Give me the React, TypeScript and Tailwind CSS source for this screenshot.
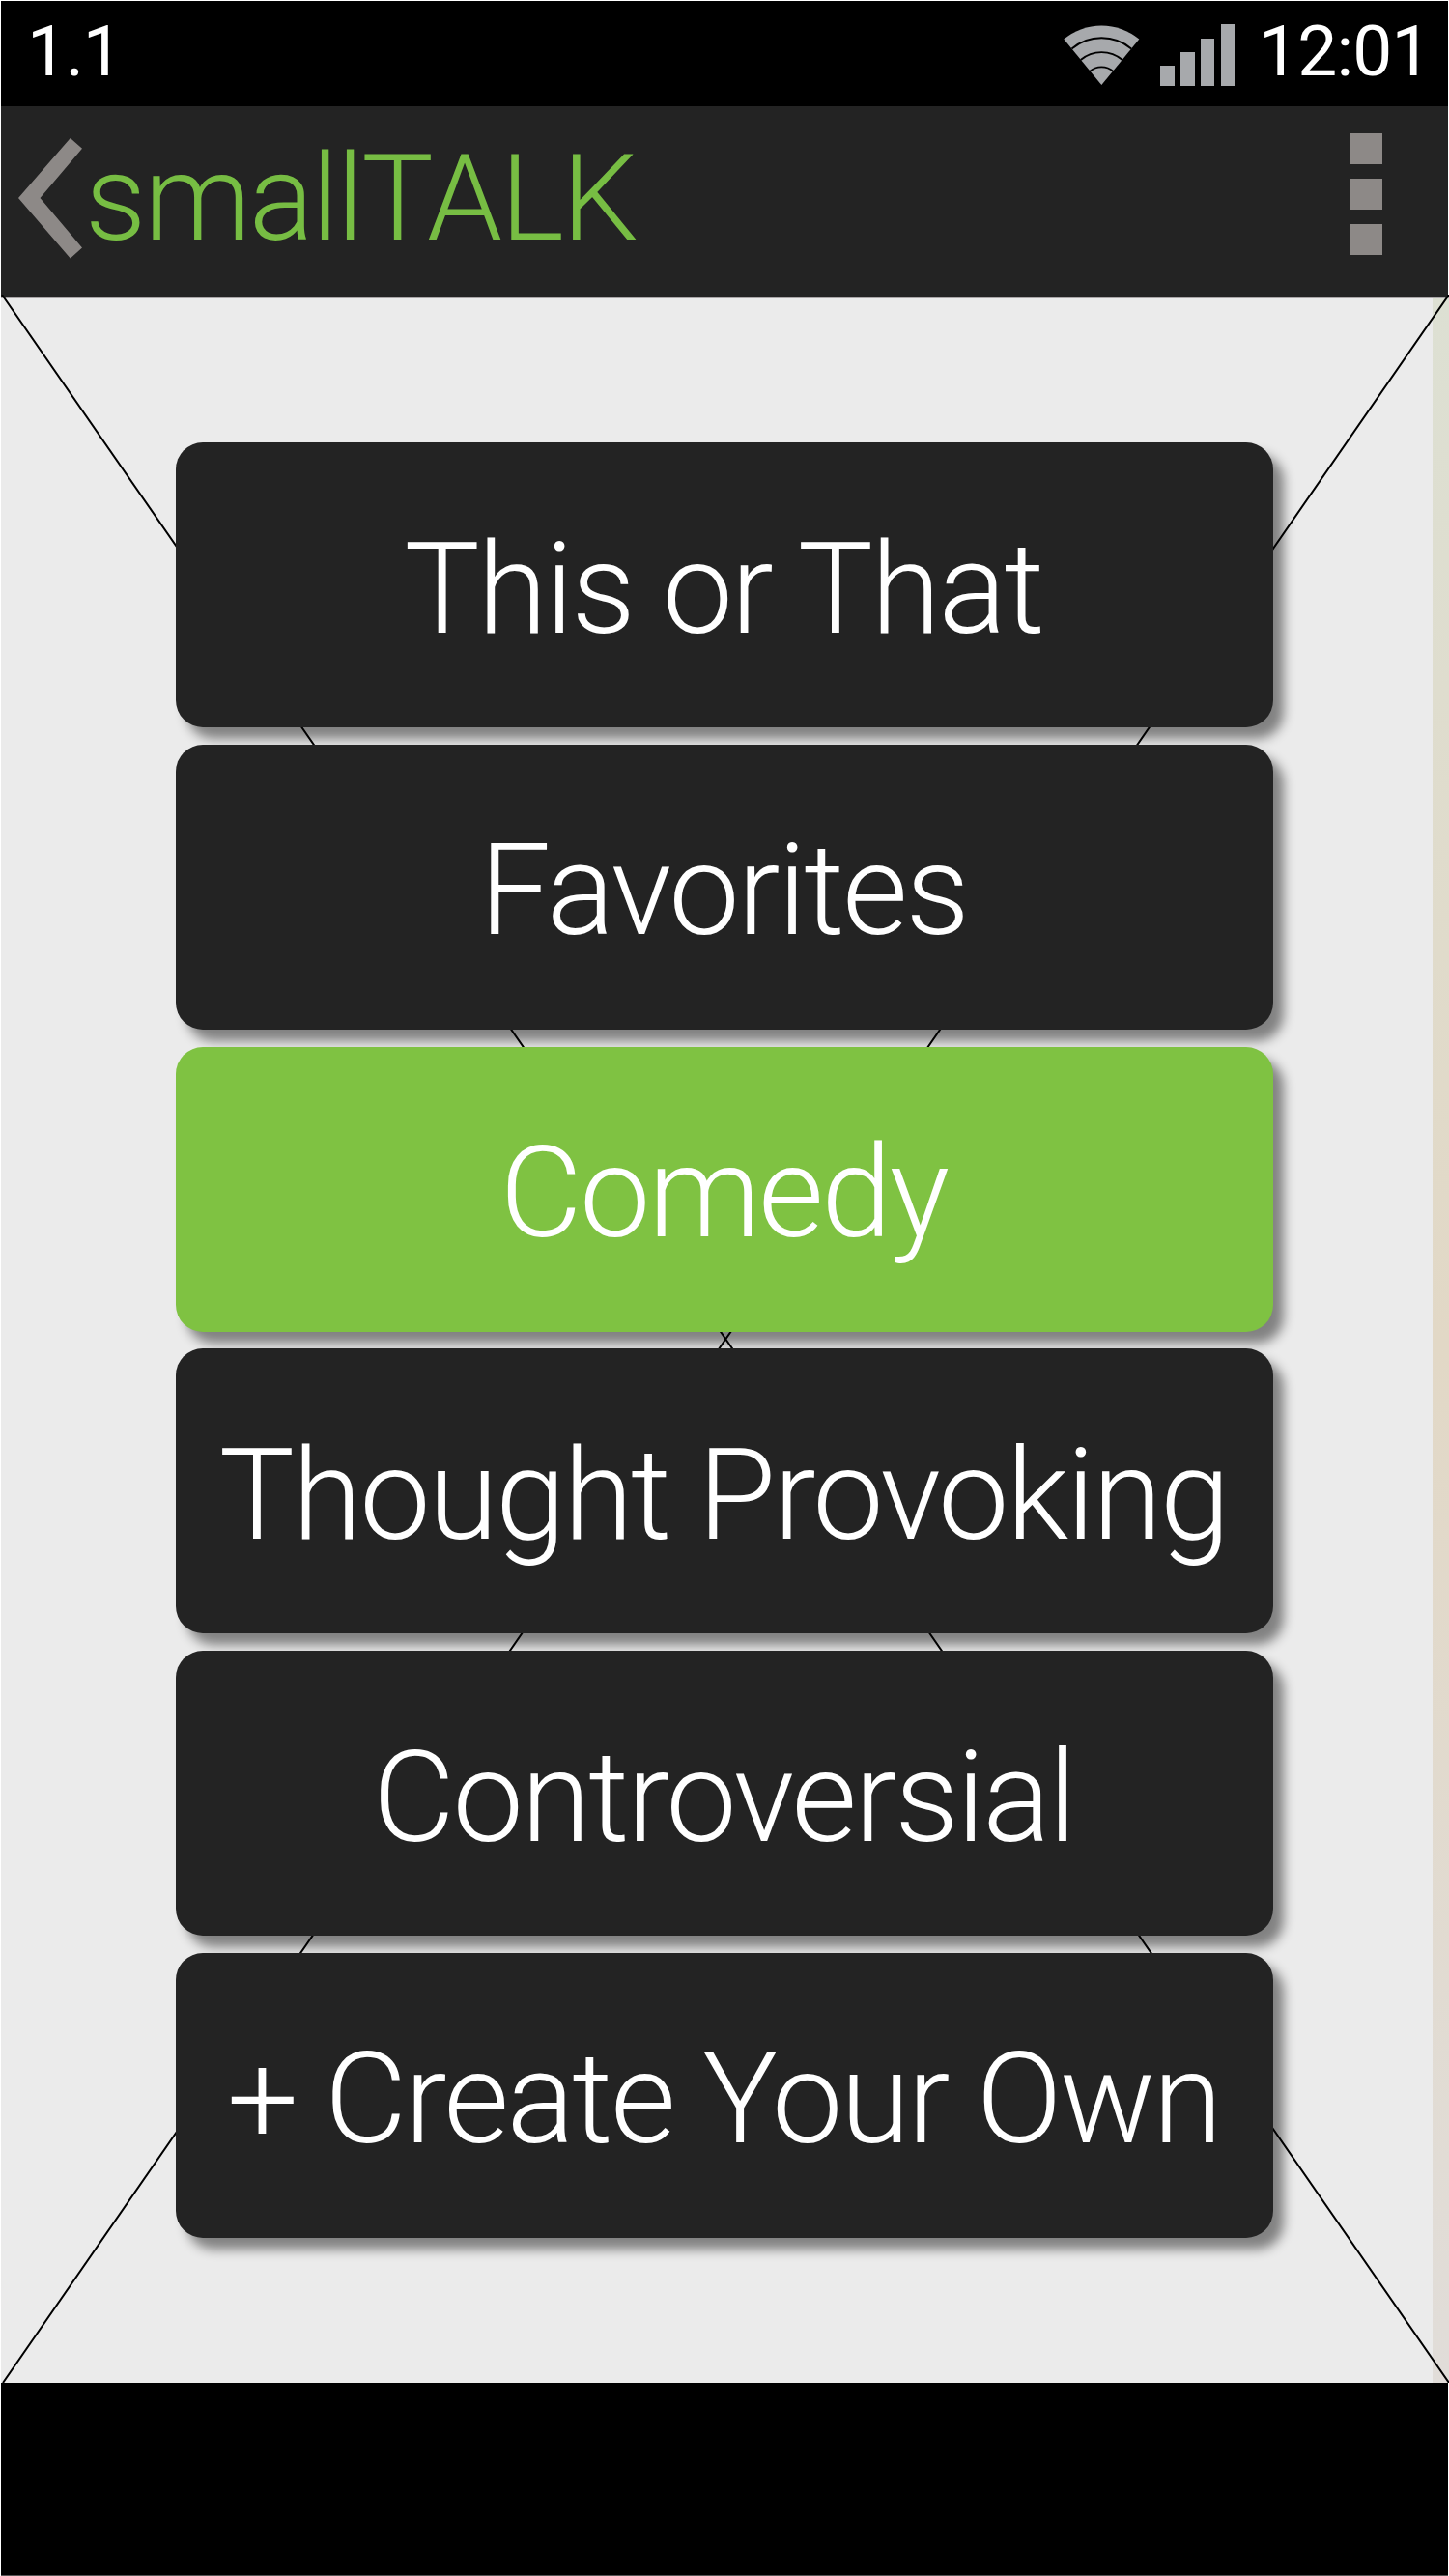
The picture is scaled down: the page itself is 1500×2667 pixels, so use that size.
const categories = [
  { label: "This or That", tracking: "tracking-[-2.2px]" },
  { label: "Favorites", tracking: "tracking-[-2.35px]" },
  { label: "Comedy", tracking: "tracking-[-2.4px]", active: true },
  { label: "Thought Provoking", tracking: "tracking-[-2.35px]" },
  { label: "Controversial", tracking: "tracking-[-2.4px]" },
  { label: "+ Create Your Own", tracking: "tracking-[-2.4px]" },
];

function WifiIcon() {
  return (
    <svg className="h-[64px] w-[80px]" viewBox="0 0 80 64">
      <path d="M40.3 63 L1.3 15.5 A61.5 61.5 0 0 1 79.3 15.5 Z" fill="#a7a9ac" />
      <g fill="none" stroke="#000" strokeWidth="1.9">
        <path d="M9.5 25.5 A48 48 0 0 1 71.1 25.5" />
        <path d="M18.7 37 A33.5 33.5 0 0 1 61.9 37" />
        <path d="M28 49 A18.7 18.7 0 0 1 52.6 49" />
      </g>
    </svg>
  );
}

function StatusBar() {
  return (
    <div className="flex h-[109px] items-start bg-black pl-[27px] text-[73px] leading-[104px] text-white">
      <span className="grow tracking-[-1.3px]">1.1</span>
      <div className="flex pt-[24px]">
        <WifiIcon />
        <div className="ml-[21px] flex h-[64px] items-end gap-[6.2px]">
          <div className="h-[21px] w-[14.5px] bg-[#a7a9ac]" />
          <div className="h-[35px] w-[14.5px] bg-[#a7a9ac]" />
          <div className="h-[49px] w-[14.5px] bg-[#a7a9ac]" />
          <div className="h-[64px] w-[14.5px] bg-[#a7a9ac]" />
        </div>
      </div>
      <span className="ml-[25px] w-[196px] whitespace-nowrap tracking-[-0.8px]">12:01</span>
    </div>
  );
}

function ActionBar() {
  return (
    <header className="flex h-[198px] items-start bg-[#232323] pl-[18px]">
      <svg className="mt-[32px] h-[127px] w-[68px]" viewBox="0 0 68 127">
        <path d="M53.8 1 L66 11.7 L22.5 63 L66 114.5 L53.8 125.5 L0 63 Z" fill="#8d8987" />
      </svg>
      <h1 className="mt-[21px] ml-px grow text-[125px] leading-[150px] font-light tracking-[-2.2px] text-[#77bd43]">
        smallTALK
      </h1>
      <div className="mt-[28px] mr-[68px] flex flex-col gap-[15px]">
        <div className="h-[32px] w-[33px] bg-[#8d8987]" />
        <div className="h-[32px] w-[33px] bg-[#8d8987]" />
        <div className="h-[32px] w-[33px] bg-[#8d8987]" />
      </div>
    </header>
  );
}

export default function App() {
  return (
    <div className="flex h-[2667px] w-[1500px] flex-col overflow-hidden bg-white pt-px font-['Roboto',sans-serif]">
      <div className="mx-px">
        <StatusBar />
        <ActionBar />
      </div>
      <main className="relative ml-px h-[2159px] border-t border-[#a9a5a7] bg-[#ebebeb]">
        <div className="absolute top-0 right-0 h-full w-[17px] bg-linear-to-b from-[#dde0d3] via-[#e2d8c6] to-[#e1ddd9]" />
        <svg className="absolute -top-[4px] -left-px h-[2162px] w-[1500px]" viewBox="0 305 1500 2162">
          <path d="M2 305 L1500 2467 M1500 305 L3 2467" stroke="#000" strokeWidth="2" />
        </svg>
        <div className="relative mt-[149px] ml-[181px] flex w-[1136px] flex-col gap-[17.8px]">
          {categories.map((c) => (
            <button
              key={c.label}
              className={`flex h-[295px] items-center justify-center rounded-[28px] pt-[8px] pr-[2px] text-[131px] leading-[150px] font-light whitespace-nowrap text-white shadow-[11px_12px_12px_rgba(0,0,0,0.45)] ${c.tracking} ${c.active ? "bg-[#7fc242]" : "bg-[#232323]"}`}
            >
              {c.label}
            </button>
          ))}
        </div>
      </main>
      <footer className="mx-px h-[200px] border-b border-[#555] bg-black" />
    </div>
  );
}
